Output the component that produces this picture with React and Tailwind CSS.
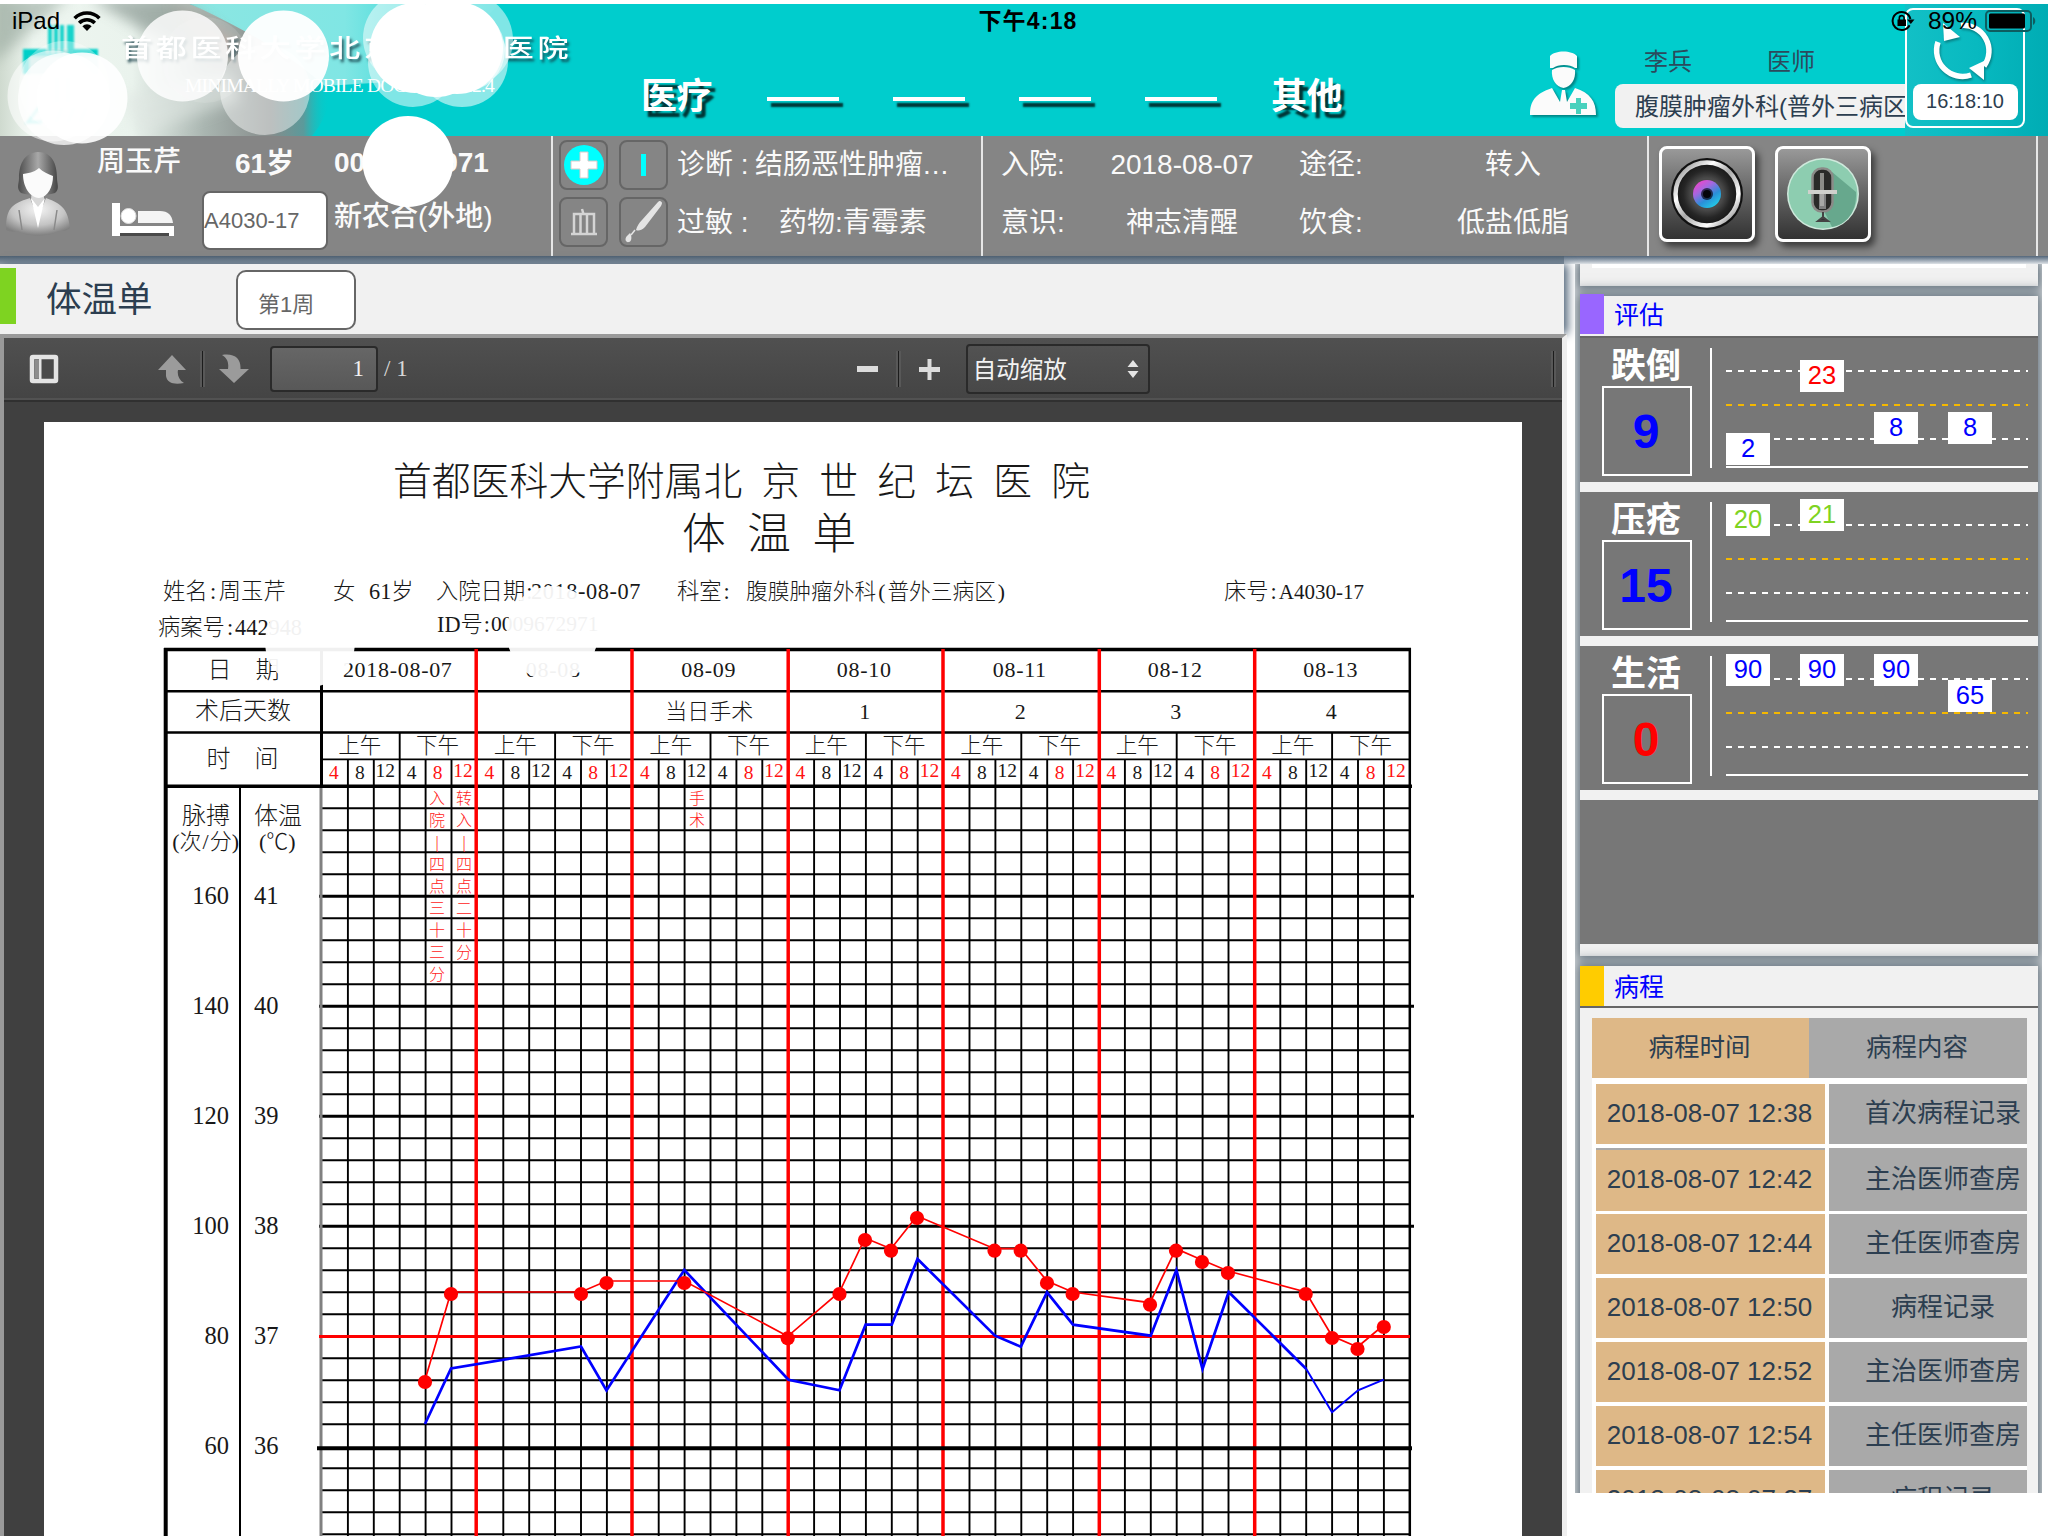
import React from "react";

const SANS = "font-['Liberation_Sans','Noto_Sans_CJK_SC',sans-serif]";
const SERIF = "font-['Liberation_Serif','Noto_Sans_CJK_SC',serif]";

/* ---------- status bar ---------- */
function StatusBar() {
  return (
    <div className="absolute inset-x-0 top-0 z-30 flex h-[42px] items-center justify-between pl-[12px] pr-[12px] text-black">
      <div className="flex w-[400px] items-center gap-[13px]">
        <span className="text-[24px] leading-none">iPad</span>
        <svg width="28" height="20" viewBox="0 0 28 20" fill="none" stroke="#000" strokeWidth="3.6">
          <path d="M1.6 7.2a17.5 17.5 0 0 1 24.8 0" />
          <path d="M6.2 12a11 11 0 0 1 15.6 0" />
          <path d="M14 20l-4.6-4.8a6.5 6.5 0 0 1 9.2 0z" fill="#000" stroke="none" />
        </svg>
      </div>
      <span className="pl-[8px] text-[23px] font-bold leading-none tracking-[1.2px]">下午4:18</span>
      <div className="flex w-[400px] items-center justify-end">
        <svg width="24" height="22" viewBox="0 0 24 22" fill="none" stroke="#000" strokeWidth="2">
          <path d="M18.6 15.2A9 9 0 1 1 19.4 9" />
          <path d="M16 9.5h7.5l-3.7 4.5z" fill="#000" stroke="none" />
          <rect x="6.5" y="9.5" width="8.5" height="6.5" fill="#000" stroke="none" />
          <path d="M8.3 10V8a2.4 2.4 0 0 1 4.8 0v2" strokeWidth="1.6" />
        </svg>
        <span className="ml-[13px] text-[24.500px] leading-none">89%</span>
        <svg className="ml-[8px]" width="51" height="22" viewBox="0 0 51 22">
          <rect x="1" y="1" width="45" height="20" rx="4" fill="none" stroke="#0d5d60" strokeWidth="2" />
          <rect x="4" y="3.5" width="36" height="15" rx="1.5" fill="#000" />
          <path d="M48 7c3 1.500 3 6.500 0 8z" fill="#0d5d60" />
        </svg>
      </div>
    </div>
  );
}

/* ---------- brand artwork ---------- */
function BrandArt() {
  return (
    <svg className="absolute left-0 top-[4px] z-10" width="620" height="208" viewBox="0 4 620 208">
      <g fill="#fff">
        <circle cx="182.500" cy="56" r="45.500" opacity=".82" />
        <circle cx="205" cy="60" r="43" opacity=".12" />
        <circle cx="265" cy="90" r="45" opacity=".45" />
        <circle cx="283.500" cy="56" r="45.500" opacity=".96" />
        <circle cx="409" cy="38" r="46" opacity=".5" />
        <circle cx="413" cy="62" r="45" opacity=".5" />
        <circle cx="466" cy="40" r="47" opacity=".5" />
        <circle cx="462" cy="61" r="46" opacity=".55" />
        <circle cx="463" cy="50" r="42" opacity=".6" />
        <circle cx="415" cy="48" r="45" />
        <circle cx="436" cy="50" r="47" />
        <circle cx="457" cy="48" r="46" />
        <circle cx="53" cy="96" r="45.500" opacity=".55" />
        <circle cx="64" cy="86" r="45" opacity=".35" />
        <circle cx="64" cy="99" r="46" opacity=".75" />
        <circle cx="82" cy="98" r="45.500" opacity=".9" />
        <circle cx="408" cy="161.500" r="45.500" />
      </g>
    </svg>
  );
}

function BrandBackdrop() {
  return (
    <svg className="absolute left-0 top-0" width="520" height="132" viewBox="0 0 520 132">
      <defs>
        <linearGradient id="base" x1="0" x2="1">
          <stop offset="0" stopColor="#cfdacf" />
          <stop offset=".1" stopColor="#eef6f0" />
          <stop offset=".4" stopColor="#eaf3ed" />
          <stop offset=".62" stopColor="#a9b5b0" />
          <stop offset=".82" stopColor="#868c8b" />
          <stop offset=".92" stopColor="#5b9a9b" />
          <stop offset="1" stopColor="#00cdcd" stopOpacity="0" />
        </linearGradient>
        <linearGradient id="streak" x1="0" x2="1">
          <stop offset="0" stopColor="#8ce6e2" />
          <stop offset=".5" stopColor="#80e6e4" />
          <stop offset="1" stopColor="#00cdcd" />
        </linearGradient>
        <filter id="soft"><feGaussianBlur stdDeviation="7" /></filter>
        <filter id="tiny"><feGaussianBlur stdDeviation="1" /></filter>
      </defs>
      <path d="M0 0H190C250 25 320 50 330 84C330 105 322 120 312 132H0z" fill="url(#base)" />
      <path d="M190 0C235 20 290 50 325 82L420 76L500 0z" fill="url(#streak)" />
      <path d="M90 -6H175C215 20 240 40 245 60L150 30z" fill="#909e98" opacity=".75" filter="url(#soft)" />
      <path d="M170 0C195 14 235 34 262 60L220 50z" fill="#d3a9a2" opacity=".6" filter="url(#soft)" />
      <path d="M-8 -8H70L-8 60z" fill="#8fa096" opacity=".55" filter="url(#soft)" />
      <path d="M120 92L230 70L240 96L140 130z" fill="#dfe6e2" opacity=".6" filter="url(#soft)" />
      <g fill="#00cfc8" filter="url(#tiny)">
        <path d="M23 46h75v24H23z" fill="#9fd8d4" />
        <path d="M23 45h24v4h26v-4h25v8H30v17h-7z" />
        <path d="M48 21h4v28h-4zM54 21h4v28h-4zM60 21h4v28h-4zM67 21h7v28h-7z" opacity=".9" />
        <rect x="55" y="74" width="4" height="24" />
        <rect x="66" y="74" width="4" height="24" />
        <path d="M40 102L28 118h14M62 104l-6 14M74 104l-6 14M86 104l-6 14" stroke="#00cfc8" strokeWidth="3" fill="none" />
      </g>
    </svg>
  );
}

/* ---------- header ---------- */
const NAV = ["医疗", "——", "——", "——", "——", "其他"];

function DoctorIcon() {
  return (
    <svg className="drop-shadow-[2px_2px_1px_rgba(0,0,0,0.35)]" width="66" height="66" viewBox="0 0 66 66">
      <path d="M20 5c5-6 22-6 27 0v12H45c-5-4-17-4-22 0H20z" fill="#fbfbfb" />
      <path d="M22 19c6-4 17-4 23 0 1 9-4 17-11.500 18C26 36 21 28 22 19z" fill="#fbfbfb" />
      <path d="M0 64C0 50 5 43 22 37l8 14 2-12h3l2 12 8-14C60 42 66 50 66 64z" fill="#fbfbfb" />
      <path d="M46 47h5v5h6v6h-6v5h-5v-5h-6v-6h6z" fill="#48d1bd" />
    </svg>
  );
}

function Header() {
  return (
    <header className="relative mt-[4px] flex h-[132px] shrink-0 bg-[#00cdcd]">
      <BrandBackdrop />
      <div className="relative flex w-[641px] shrink-0 flex-col pl-[121px] pt-[24px]">
        <div className="origin-left scale-y-[0.82] whitespace-nowrap text-[31px] font-medium leading-[42px] tracking-[3.700px] text-white [text-shadow:2px_3px_3px_rgba(20,60,70,0.8)]">
          首都医科大学北京世纪坛医院
        </div>
        <div className="ml-[64px] mt-[4px] whitespace-nowrap font-['Liberation_Serif',serif] text-[19.500px] leading-[24px] tracking-[-0.8px] text-white">
          MINIMALLY MOBILE DOCTOR V2.2.4
        </div>
      </div>
      <nav className="flex w-[874px] shrink-0 gap-[54px] pt-[68px]">
        {NAV.map((n, i) => (
          <span key={i} className="w-[72px] whitespace-nowrap text-[36px] font-bold leading-[50px] tracking-[-0.5px] text-white [text-shadow:4px_6px_2px_rgba(0,0,0,0.75)]">
            {n === "——" ? <span className="mt-[25px] block h-[4px] w-[72px] bg-white shadow-[4px_6px_2px_rgba(0,0,0,0.75)]" /> : n}
          </span>
        ))}
      </nav>
      <div className="-ml-[85px] flex pl-[100px] pt-[47px]">
        <DoctorIcon />
      </div>
      <div className="ml-[19px] w-[290px] shrink-0 overflow-hidden pt-[43px] text-[24px] text-[#2b4a5c]">
        <div className="flex h-[37px] gap-[75px] pl-[29px] leading-[30px]">
          <span>李兵</span>
          <span>医师</span>
        </div>
        <div className="h-[44px] w-[400px] whitespace-nowrap rounded-lg bg-[#f1f1f1] pl-[20px] leading-[45px] text-[#2c3e50]">
          腹膜肿瘤外科(普外三病区)
        </div>
      </div>
      <div className="w-[143px] shrink-0 bg-gradient-to-r from-[#12c0c6] via-[#08b9c0] to-[#00acb4] pt-[4px]">
        <div className="flex h-[120px] w-[120px] flex-col items-center rounded-lg border-2 border-white pt-[8px]">
          <svg className="-ml-[4px] drop-shadow-[1px_2px_1px_rgba(0,0,0,0.3)]" width="64" height="66" viewBox="0 0 64 66" fill="none" stroke="#fff" strokeWidth="5.500">
            <path d="M30 7.500A25.500 25.500 0 0 1 53 48" />
            <path d="M7 24A26 26 0 0 0 40 57" />
            <path d="M12 5l17 14-16 4z" fill="#fff" stroke="none" />
            <path d="M53 62L53 43 38 50z" fill="#fff" stroke="none" />
          </svg>
          <div className="h-[36px] w-[105px] rounded-lg bg-white text-center text-[20px] leading-[34px] text-[#2c3e50]">16:18:10</div>
        </div>
      </div>
    </header>
  );
}

/* ---------- patient strip ---------- */
function Avatar() {
  return (
    <svg width="66" height="86" viewBox="0 0 66 86">
      <defs>
        <linearGradient id="hair" x1="0" x2="1">
          <stop offset="0" stopColor="#4c4c4c" /><stop offset=".5" stopColor="#a8a8a8" /><stop offset="1" stopColor="#444" />
        </linearGradient>
        <radialGradient id="suit" cx=".5" cy=".3" r=".7">
          <stop offset="0" stopColor="#f4f4f4" /><stop offset=".6" stopColor="#c4c4c4" /><stop offset="1" stopColor="#808080" />
        </radialGradient>
      </defs>
      <path d="M33 0C18 1 14 14 14 26c0 6-3 10 2 15 10 3 24 3 34 0 5-4 2-9 2-15C52 12 47 0 33 0z" fill="url(#hair)" />
      <path d="M27 36h12v12l-6 12-7-12z" fill="#d8d8d8" />
      <path d="M18 22c8-1 13-3 16-6 4 4 9 6 14 8 0 11-5 21-14 22C24 45 18 34 18 22z" fill="#fbfbfb" />
      <path d="M1 78c0-20 4-26 24-32l8 20 8-20c17 6 22 12 24 30-4 4-9 3-12 3-9 6-31 6-40 0-4 1-9 1-12-1z" fill="url(#suit)" />
      <path d="M26 46l7 30 7-30-7 9z" fill="#fff" />
      <path d="M14 58l3 20M52 58l-3 20" stroke="#8a8a8a" strokeWidth="1.500" />
    </svg>
  );
}

function BedIcon() {
  return (
    <svg width="62" height="33" viewBox="0 0 62 33">
      <path d="M0 0h8v23h54v10h-5v-2H8v2H0z" fill="#fff" />
      <path d="M8 30h49v3H8z" fill="#4a4a4a" />
      <circle cx="16.500" cy="13" r="7.500" fill="#fff" stroke="#ddd" />
      <path d="M26 20V8h22c8 0 12 4 13 12z" fill="#f4f4f4" />
    </svg>
  );
}

function IconBox({ children }) {
  return <div className="flex h-[50px] w-[49px] items-center justify-center rounded-lg border-2 border-[#666]">{children}</div>;
}

function PatientBar() {
  return (
    <section className="flex h-[120px] shrink-0 bg-[#858585] text-[28px] leading-[40px] text-[#fafafa]">
      <div className="flex w-[551px] shrink-0">
        <div className="w-[97px] pl-[5px] pt-[16px]"><Avatar /></div>
        <div className="w-[105px] pt-[6px] font-medium">
          <div className="w-[90px] whitespace-nowrap">周玉芹</div>
          <div className="ml-[15px] mt-[21px]"><BedIcon /></div>
        </div>
        <div className="w-[131px] pt-[8px]">
          <div className="pl-[33px] font-bold">61岁</div>
          <div className="mt-[7px] h-[59px] w-[126px] rounded-lg border-2 border-[#666] bg-white text-[22px] leading-[56px] text-[#666]">A4030-17</div>
        </div>
        <div className="whitespace-nowrap pl-[1px] pt-[7px]">
          <div className="font-bold tracking-[-0.1px]">0009672971</div>
          <div className="mt-[14px] font-medium">新农合(外地)</div>
        </div>
      </div>
      <div className="flex w-[430px] shrink-0 border-l-2 border-white/80 pl-[6px] pt-[4px]">
        <div className="grid h-[107px] grid-cols-2 gap-x-[11px] gap-y-[7px]">
          <IconBox>
            <svg width="40" height="40" viewBox="0 0 40 40">
              <circle cx="20" cy="20" r="20" fill="#0ff" />
              <path d="M16 7h8v9h9v8h-9v9h-8v-9H7v-8h9z" fill="#fff" stroke="#d9c9c9" strokeWidth="1" />
            </svg>
          </IconBox>
          <IconBox><div className="h-[22px] w-[5px] bg-[#0ff]" /></IconBox>
          <IconBox>
            <svg width="28" height="28" viewBox="0 0 28 28" fill="none" stroke="#d4d4d4" strokeWidth="2.500">
              <path d="M1 26h26M4 25V6h20v19M10.500 6v19M17 6v19M12 1l1.500 5" />
            </svg>
          </IconBox>
          <IconBox>
            <svg width="38" height="42" viewBox="0 0 38 42" fill="#e4e4e4">
              <path d="M35 0c3 1 2 3 1 5L20 26c-4 4-7 4-9 3 1-4 3-7 6-10L33 1c1-1 1-1 2-1z" />
              <path d="M10 29l-4 5" stroke="#e4e4e4" strokeWidth="1.500" />
              <path d="M5 32c2 3 2 8-1 9s-5-3-2-6z" />
            </svg>
          </IconBox>
        </div>
        <div className="ml-[9px] w-[300px] whitespace-nowrap pt-[5px]">
          <div className="flex"><span className="w-[78px]">诊断 :</span><span>结肠恶性肿瘤<span className="tracking-[1px]">...</span></span></div>
          <div className="mt-[18px] flex"><span className="w-[102px]">过敏 :</span><span>药物:青霉素</span></div>
        </div>
      </div>
      <div className="grid w-[666px] shrink-0 grid-cols-[90px_182px_90px_304px] grid-rows-[58px_57px] whitespace-nowrap border-l-2 border-white/80 pl-[18px] pt-[9px]">
        <span>入院:</span><span className="text-center">2018-08-07</span><span className="pl-[26px]">途径:</span><span className="pr-[4px] text-center">转入</span>
        <span>意识:</span><span className="text-center">神志清醒</span><span className="pl-[26px]">饮食:</span><span className="pr-[4px] text-center">低盐低脂</span>
      </div>
      <div className="flex w-[391px] shrink-0 gap-[20px] border-x-2 border-white/80 pl-[10px] pt-[10px]">
        <div className="flex h-[96px] w-[96px] items-center justify-center rounded-lg border-[3px] border-white bg-gradient-to-b from-[#999] to-[#333] shadow-[4px_5px_7px_rgba(0,0,0,0.55)]">
          <svg width="72" height="72" viewBox="0 0 72 72">
            <defs>
              <linearGradient id="ring" x1="0" y1="0" x2="1" y2="1">
                <stop offset="0" stopColor="#777" /><stop offset=".3" stopColor="#fff" /><stop offset=".5" stopColor="#aaa" /><stop offset=".75" stopColor="#fff" /><stop offset="1" stopColor="#666" />
              </linearGradient>
              <linearGradient id="iris" x1=".1" y1="0" x2=".8" y2="1">
                <stop offset="0" stopColor="#ff3ec8" /><stop offset=".35" stopColor="#a368e0" /><stop offset=".65" stopColor="#2a8fd8" /><stop offset="1" stopColor="#22d3e8" />
              </linearGradient>
              <radialGradient id="barrel">
                <stop offset=".5" stopColor="#4a4a4a" /><stop offset=".75" stopColor="#262626" /><stop offset="1" stopColor="#161616" />
              </radialGradient>
            </defs>
            <circle cx="36" cy="36" r="36" fill="#111" />
            <circle cx="36" cy="36" r="31.500" fill="url(#barrel)" stroke="url(#ring)" strokeWidth="4.500" />
            <circle cx="36" cy="36" r="14" fill="url(#iris)" />
            <circle cx="36" cy="36" r="6" fill="#0a0a18" opacity=".7" />
            <circle cx="36" cy="36" r="4" fill="#05050a" />
          </svg>
        </div>
        <div className="flex h-[96px] w-[96px] items-center justify-center rounded-lg border-[3px] border-white bg-gradient-to-b from-[#999] to-[#333] shadow-[4px_5px_7px_rgba(0,0,0,0.55)]">
          <svg width="72" height="72" viewBox="0 0 72 72">
            <circle cx="36" cy="36" r="36" fill="#cfe9dc" />
            <circle cx="36" cy="36" r="34.500" fill="#8dcdb0" />
            <path d="M45 14L69 34c1 20-10 33-24 35L38 55z" fill="#67a88d" />
            <rect x="25.500" y="10.500" width="20" height="43" rx="9" fill="#2a2a28" stroke="#8b8b88" strokeWidth="2.500" />
            <rect x="33" y="15" width="4" height="33" fill="#a5a5a0" opacity=".8" />
            <rect x="21" y="32" width="29" height="4" fill="#d0d0cc" />
            <path d="M32 36h7v15h-7z" fill="#bbb" opacity=".6" />
            <path d="M36 54v7M31 63l5-4 5 4z" stroke="#444" strokeWidth="2" fill="#333" />
          </svg>
        </div>
      </div>
    </section>
  );
}

/* ---------- PDF viewer toolbar ---------- */
function Divider() {
  return <div className="h-[36px] w-[5px] border-x-2 border-[#585858] bg-[#1c1c1c]" />;
}

function Toolbar() {
  return (
    <div className="flex h-[64px] shrink-0 items-center border-b-2 border-[#303030] bg-gradient-to-b from-[#505050] to-[#444] shadow-[inset_0_-2px_0_#525252]">
      <svg className="ml-[25px]" width="30" height="30" viewBox="0 0 30 30">
        <rect x="3" y="3" width="24" height="24" fill="#4a4a4a" stroke="#e4e4e4" strokeWidth="4.500" rx="1" />
        <rect x="5.500" y="5.500" width="5" height="19" fill="#8d8d8d" />
        <rect x="10" y="5" width="2.500" height="20" fill="#e4e4e4" />
      </svg>
      <svg className="ml-[98px]" width="30" height="30" viewBox="0 0 30 30" fill="#9b9b9b">
        <path d="M15 1L29 16H21C20 21 22 26 27 29C17 31 10 29 9 22V16H1z" />
      </svg>
      <div className="ml-[13px]"><Divider /></div>
      <svg className="ml-[14px]" width="30" height="30" viewBox="0 0 30 30" fill="#9b9b9b">
        <path d="M15 29L30 15H21.500C22 5 16-1 3 1c5 3 7 7 6 14H0z" />
      </svg>
      <div className="ml-[21px] h-[46px] w-[108px] rounded border-2 border-[#2a2a2a] bg-gradient-to-b from-[#666] to-[#585858] pr-[12px] text-right font-['Liberation_Serif',serif] text-[23px] leading-[42px] text-[#f2f2f2]">1</div>
      <span className="ml-[6px] font-['Liberation_Serif',serif] text-[23px] text-[#d8d8d8]">/ 1</span>
      <svg className="ml-[449px]" width="22" height="22" viewBox="0 0 22 22"><rect x="0" y="8" width="21" height="6" fill="#dcdcdc" /></svg>
      <div className="ml-[17px]"><Divider /></div>
      <svg className="ml-[18px]" width="22" height="22" viewBox="0 0 22 22" fill="#dcdcdc"><path d="M8.500 1h4v8h8.500v5h-8.500v8h-4v-8H0V9h8.500z" /></svg>
      <div className="ml-[25px] flex h-[50px] w-[184px] items-center justify-between rounded border-2 border-[#2a2a2a] bg-gradient-to-b from-[#525252] to-[#484848] pl-[5px] pr-[9px] text-[23.500px] text-[#f2f2f2]">
        <span className="pt-[3px]">自动缩放</span>
        <svg width="12" height="18" viewBox="0 0 12 18" fill="#e4e4e4"><path d="M6 0l5.500 7H.5zM6 18l5.500-7H.5z" /></svg>
      </div>
      <div className="ml-auto mr-[6px]"><Divider /></div>
    </div>
  );
}

/* ---------- temperature sheet ---------- */
const DATES = ["2018-08-07", "08-08", "08-09", "08-10", "08-11", "08-12", "08-13"];
const POSTOP = ["", "", "当日手术", "1", "2", "3", "4"];
const HOURS = [["4", true], ["8", false], ["12", false], ["4", false], ["8", true], ["12", true]];

const X0 = 322, STEP = 25.9, Y0 = 786.3, ROW = 22;
const TEMPS = [
  [425, 1382], [451, 1294], [581, 1294], [606.5, 1283], [684.3, 1283], [787.700, 1338.300], [839.5, 1294], [865, 1240],
  [891, 1250.700], [917, 1218], [994.5, 1250.700], [1020.700, 1250.700], [1047, 1283], [1072.600, 1294], [1150, 1304.700],
  [1176, 1250.700], [1202, 1262], [1228, 1273], [1305.700, 1294], [1332, 1338], [1357.500, 1349], [1383.800, 1327],
];
const PULSE = [
  [425, 1424], [451, 1368.5], [581, 1346.5], [606.5, 1390.5], [684.3, 1270], [788.5, 1379.700], [839.5, 1390.3], [865.600, 1324.700],
  [891.800, 1324.700], [917.5, 1259], [995, 1335.700], [1020.800, 1346.700], [1047, 1292.300], [1073, 1324.700], [1150.700, 1335.700],
  [1176.400, 1270], [1202.5, 1369], [1228.700, 1292], [1306.300, 1369], [1332, 1412.300], [1358, 1390.300], [1383.800, 1379.700],
];
const NOTES = [
  { x: 437, text: "入院|四点三十三分" },
  { x: 464, text: "转入|四点二十分" },
  { x: 697, text: "手术" },
];

function SheetRules() {
  const bottom = 1536;
  const vs = Array.from({ length: 42 }, (_, i) => i + 1).filter((k) => k % 6 !== 0);
  const hs = Array.from({ length: 34 }, (_, i) => i + 1);
  return (
    <svg className="absolute left-0 top-0" width="1260" height="892" viewBox="160 644 1260 892">
      <g stroke="#000" fill="none">
        <path d="M164 649.5H1411" strokeWidth="3.500" />
        <path d="M165.700 648V1536" strokeWidth="4" />
        <path d="M1409.800 648V1536" strokeWidth="2.500" />
        <path d="M321.500 648V786" strokeWidth="3" />
        <path d="M165 691.3H1410M165 732.5H1410" strokeWidth="2.400" />
        <path d="M322 759.4H1410" strokeWidth="1.900" />
        <path d="M165 786.3H1412" strokeWidth="3.400" />
        <path d="M240 786V1536" strokeWidth="2" />
        {vs.map((k) => (
          <path key={k} d={`M${X0 + k * STEP} ${k % 6 === 3 ? 732 : 759}V${bottom}`} strokeWidth="1.900" />
        ))}
        {hs.map((k) => {
          const y = Y0 + k * ROW;
          const heavy = k % 5 === 0 && k !== 25;
          if (k === 30) return null;
          return <path key={k} d={`M${heavy ? 319 : 322} ${y}H${heavy ? 1414 : 1410}`} strokeWidth={heavy ? 2.9 : 1.9} />;
        })}
      </g>
      <path d="M321 788V1536" stroke="#808080" strokeWidth="3" />
      <g stroke="#f00" strokeWidth="3.500" fill="none">
        {[476.2, 632, 788.2, 943, 1099.3, 1254.700].map((x) => <path key={x} d={`M${x} 649V${bottom}`} />)}
        <path d="M319 1336.500H1410" strokeWidth="3.200" />
      </g>
      <path d="M317 1448.3H1412" stroke="#000" strokeWidth="4" />
      <polyline points={PULSE.slice(0, 19).join(" ")} fill="none" stroke="#00f" strokeWidth="2.700" />
      <polyline points={PULSE.slice(18).join(" ")} fill="none" stroke="#00f" strokeWidth="1.900" />
      <polyline points={TEMPS.map(([x, y]) => [x, y - 2]).join(" ")} fill="none" stroke="#f00" strokeWidth="1.700" />
      {TEMPS.map(([x, y]) => <circle key={x} cx={x} cy={y} r="7.100" fill="#f00" />)}
      <g fill="#f22" className="text-[16px] font-light" textAnchor="middle">
        {NOTES.map((n) =>
          [...n.text].map((c, i) => <text key={n.x + "-" + i} x={n.x} y={803.500 + i * 22.050}>{c}</text>)
        )}
      </g>
    </svg>
  );
}

function Axis({ title, unit, values, className, labelClass }) {
  return (
    <div className={className}>
      <div className={"text-[24px] leading-[26px] " + labelClass}>{title}</div>
      <div className={"whitespace-nowrap text-[22px] leading-[26px] " + labelClass}>{unit}</div>
      <div className="pt-[15px]">
        {values.map((v) => <div key={v} className="h-[110.100px] text-[24.500px] leading-[52px]">{v}</div>)}
      </div>
    </div>
  );
}

function Sheet() {
  return (
    <div className={"relative ml-[40px] mt-[20px] h-[1114px] w-[1478px] shrink-0 bg-white font-light text-[#181818] " + SERIF}>
      <div className="whitespace-pre pl-[349px] pt-[34px] text-[38.800px] leading-[52px] [word-spacing:9.500px]">首都医科大学附属北 京 世 纪 坛 医 院</div>
      <div className="whitespace-pre pl-[638px] text-[43.700px] leading-[52px] [word-spacing:10.600px]">体 温 单</div>
      <div className="mt-[15px] flex h-[34px] items-center whitespace-nowrap pl-[119px] text-[22.300px] leading-[34px]">
        <span className="w-[170px]">姓名<span className="mx-[2.500px]">:</span>周玉芹</span>
        <span className="w-[36px]">女</span>
        <span className="w-[67px]">61岁</span>
        <span className="w-[95px]">入院日期<span className="ml-[1px]">:</span></span>
        <span className="w-[146px] tracking-[0.6px]">2018-08-07</span>
        <span className="w-[69px]">科室<span className="ml-[2px]">:</span></span>
        <span className="w-[478px] text-[21.700px]">腹膜肿瘤外科<span className="mx-[2px]">(</span>普外三病区<span className="mx-[2px]">)</span></span>
        <span>床号<span className="mx-[2px]">:</span><span className="text-[21px]">A4030-17</span></span>
      </div>
      <div className="flex h-[36px] whitespace-nowrap pl-[114px] text-[22.300px] leading-[31px]">
        <span className="w-[279px] pt-[3px]">病案号<span className="mx-[2px]">:</span>442948</span>
        <span className="w-[54px]">ID号<span className="ml-[1px]">:</span></span>
        <span className="text-[21.500px]">0009672971</span>
      </div>
      <div className="relative -mt-[1px] ml-[116px] h-[892px] w-[1260px]">
        <SheetRules />
        <div className="relative ml-[4px] pt-[5px]">
          <div className="flex h-[41px] items-center text-[22px]">
            <div className="flex w-[157px] justify-center gap-[24px] pl-[2px] text-[24px]"><span>日</span><span>期</span></div>
            {DATES.map((d) => (
              <div key={d} className="w-[155.500px] pr-[2px] text-center tracking-[0.7px]">{d}</div>
            ))}
          </div>
          <div className="flex h-[42px] items-center text-[22px]">
            <div className="w-[157px] pl-[1px] text-center text-[24px]">术后天数</div>
            {POSTOP.map((d, i) => <div key={i} className="w-[155.500px] pr-[1px] text-center">{d}</div>)}
          </div>
          <div className="flex h-[54px]">
            <div className="flex w-[157px] items-center justify-center gap-[24px] text-[24px]"><span>时</span><span>间</span></div>
            {DATES.map((d) => (
              <div key={d} className="w-[155.500px] text-center">
                <div className="grid h-[27px] grid-cols-2 text-[21.500px] leading-[28px]"><span>上午</span><span>下午</span></div>
                <div className="grid h-[27px] grid-cols-6 text-[19.500px] leading-[24px]">
                  {HOURS.map(([h, red], i) => (
                    <span key={i} className={(red ? "text-[#f11] " : "") + (h === "12" ? "pr-[1px]" : "pt-[2px]")}>{h}</span>
                  ))}
                </div>
              </div>
            ))}
          </div>
          <div className="flex pt-[17px]">
            <Axis className="w-[65px] text-right" labelClass="-mr-[10px] -ml-[10px]" title={<span className="pr-[9px]">脉搏</span>} unit={<span>(次<span className="mx-[1px]">/</span>分)</span>} values={[160, 140, 120, 100, 80, 60]} />
            <Axis className="ml-[25px] w-[60px]" labelClass="" title="体温" unit={<span className="pl-[5px]">(℃)</span>} values={[41, 40, 39, 38, 37, 36]} />
          </div>
        </div>
        <svg className="absolute -top-[70px] left-0" width="500" height="120" viewBox="160 574 500 120" fill="#fff" opacity=".94">
          <circle cx="310" cy="642" r="45" />
          <circle cx="552.500" cy="632" r="46" />
          <circle cx="552.500" cy="636" r="45" />
        </svg>
      </div>
    </div>
  );
}

function TemperaturePane() {
  return (
    <main className="flex w-[1567px] shrink-0 flex-col">
      <div className="flex h-[70px] w-[1564px] shrink-0 items-start bg-[#f1f1f1] shadow-[4px_0_9px_#53677b]">
        <div className="mt-[4px] h-[56px] w-[16px] bg-[#7ed321]" />
        <div className="ml-[30px] mt-[10px] w-[190px] text-[35.500px] leading-[52px] text-[#2c3e50]">体温单</div>
        <div className="mt-[6px] h-[60px] w-[120px] rounded-[10px] border-2 border-[#666] bg-white pl-[20px] text-[22px] leading-[66px] text-[#666]">第1周</div>
      </div>
      <div className="relative flex h-[1202px] flex-col overflow-hidden border-l-4 border-r-[5px] border-t-4 border-l-[#9a9a9a] border-r-[#eee] border-t-[#9a9a9a] bg-[#404040]">
        <Toolbar />
        <Sheet />
      </div>
    </main>
  );
}

/* ---------- side panels ---------- */
const SCORES = [
  { label: "跌倒", value: 9, cls: "text-[#00f]", marks: [[0, 95, 2, "text-[#00f]"], [74, 22, 23, "text-[#f00]"], [148, 74, 8, "text-[#00f]"], [222, 74, 8, "text-[#00f]"]] },
  { label: "压疮", value: 15, cls: "text-[#00f]", marks: [[0, 12, 20, "text-[#7ed321]"], [74, 7, 21, "text-[#7ed321]"]] },
  { label: "生活", value: 0, cls: "text-[#f00]", marks: [[0, 8, 90, "text-[#00f]"], [74, 8, 90, "text-[#00f]"], [148, 8, 90, "text-[#00f]"], [222, 34, 65, "text-[#00f]"]] },
];
const RECORDS = [
  ["2018-08-07 12:38", "首次病程记录"],
  ["2018-08-07 12:42", "主治医师查房"],
  ["2018-08-07 12:44", "主任医师查房"],
  ["2018-08-07 12:50", "病程记录"],
  ["2018-08-07 12:52", "主治医师查房"],
  ["2018-08-07 12:54", "主任医师查房"],
  ["2018-08-08 07:27", "病程记录"],
];

function ScoreCard({ label, value, cls, marks }) {
  return (
    <div className="mb-[10px] flex h-[144px] bg-[#777]">
      <div className="ml-[22px] w-[90px]">
        <div className="h-[48px] pr-[2px] text-center text-[35px] font-bold leading-[56px] text-white">{label}</div>
        <div className={"h-[90px] border-2 border-white pr-[2px] text-center text-[48px] font-bold leading-[87px] " + cls}>{value}</div>
      </div>
      <div className="ml-[18px] mt-[10px] h-[120px] w-[2px] bg-white" />
      <div className="relative ml-[14px] h-[130px] w-[302px]">
        <svg className="block" width="302" height="130" fill="none" strokeWidth="2">
          <path d="M0 33H302M0 101H302" stroke="#fff" strokeDasharray="6 6" />
          <path d="M0 67H302" stroke="#f5b800" strokeDasharray="6 6" />
          <path d="M0 129H302" stroke="#fff" />
        </svg>
        {marks.map(([x, y, n, c]) => (
          <span key={x} style={{ left: x, top: y }} className={"absolute h-[32px] w-[44px] bg-white text-center text-[25.500px] leading-[31px] " + c}>{n}</span>
        ))}
      </div>
    </div>
  );
}

function Side() {
  return (
    <aside className="ml-[8px] h-[1229px] w-[467px] shrink-0 overflow-hidden bg-white px-[5px]">
      <div className="h-[22px] w-[458px] bg-[#f1f1f1] px-[12px] shadow-[0_0_12px_5px_#66747f]"><div className="h-[4px] bg-white" /></div>
      <section className="relative mt-[10px] w-[458px] bg-[#f1f1f1] shadow-[0_0_12px_5px_#66747f]">
        <div className="flex h-[42px] border-b-2 border-[#666]">
          <div className="-mt-[2px] h-[40px] w-[24px] bg-[#9966ff]" />
          <h2 className="ml-[10px] text-[25px] leading-[38px] text-[#00f]">评估</h2>
        </div>
        {SCORES.map((s) => <ScoreCard key={s.label} {...s} />)}
        <div className="h-[144px] bg-[#777]" />
        <div className="h-[12px]" />
      </section>
      <section className="relative mt-[10px] h-[560px] w-[458px] bg-[#f1f1f1] shadow-[0_0_12px_5px_#66747f]">
        <div className="flex h-[42px] border-b-2 border-[#666]">
          <div className="h-[40px] w-[24px] bg-[#ffcc00]" />
          <h2 className="ml-[10px] text-[25px] leading-[42px] text-[#00f]">病程</h2>
        </div>
        <div className="ml-[12px] mt-[10px] w-[435px] bg-white text-[26px] leading-[59px] text-[#2c3e50]">
          <div className="mb-[6px] grid h-[60px] grid-cols-[217px_218px] text-center text-[25.500px]">
            <div className="bg-[#deb887] pr-[2px]">病程时间</div>
            <div className="bg-[#a9a9a9] pr-[2px]">病程内容</div>
          </div>
          {RECORDS.map(([t, c], i) => (
            <div key={t} className={"mb-[4px] ml-[4px] grid grid-cols-[229px_198px] gap-[4px] text-center " + (i === 1 ? "h-[62px] leading-[63px]" : "h-[60px]")}>
              <div className={"whitespace-nowrap bg-[#deb887] pr-[2px] " + (i === 1 ? "border-t-2 border-[#a9a9a9] leading-[59px]" : "")}>{t}</div>
              <div className="whitespace-nowrap bg-[#a9a9a9] pl-[30px]">{c}</div>
            </div>
          ))}
        </div>
      </section>
    </aside>
  );
}

export default function App() {
  return (
    <div className={"relative flex h-[1536px] w-[2048px] flex-col overflow-hidden bg-white " + SANS}>
      <StatusBar />
      <Header />
      <BrandArt />
      <PatientBar />
      <div className="flex h-[8px] shrink-0">
        <div className="w-[1564px] bg-gradient-to-b from-[#4f6172] to-[#8d99a5]" />
        <div className="flex-1 bg-gradient-to-b from-[#53667a] to-[#dfe3e7]" />
      </div>
      <div className="flex h-[1272px] shrink-0">
        <TemperaturePane />
        <Side />
      </div>
    </div>
  );
}
